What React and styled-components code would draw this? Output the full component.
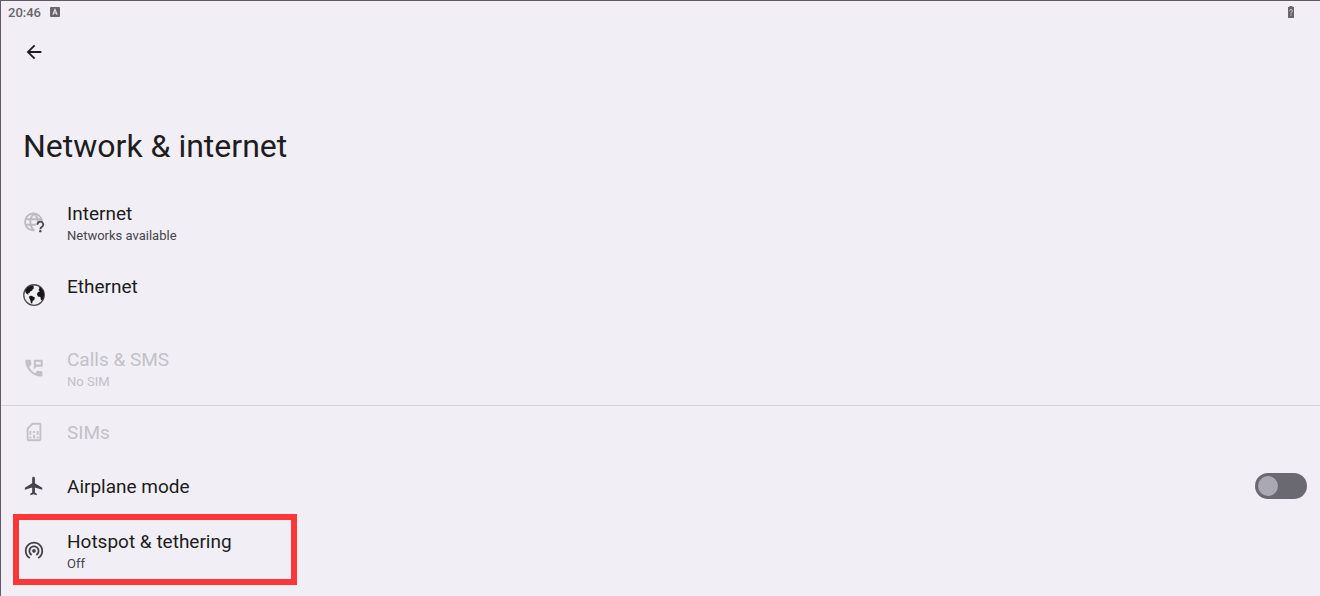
import React, { useState } from 'react'
import styled, { createGlobalStyle } from 'styled-components'

const GlobeIcon = () => (
  <Icon viewBox='0 0 24 24'>
    <g fill='none' stroke='#bcbbc1' strokeWidth='2'>
      <path d='M12.500 21A9.200 9.200 0 1 1 20.600 11' />
      <path d='M12 21C9.200 18.700 8 15.700 8 12S9.200 5.500 12 3c2.800 2.500 4 5 4 8.500' />
      <path d='M3.500 9h17M3.500 15h10.500' />
    </g>
    <path
      d='M15.800 15a3.100 3.100 0 1 1 4.700 2.400c-1.200.8-1.600 1.200-1.600 2.400'
      fill='none'
      stroke='#4b4a50'
      strokeWidth='2'
    />
    <circle cx='18.900' cy='22' r='1.300' fill='#4b4a50' />
  </Icon>
)

const EarthIcon = () => (
  <Icon viewBox='0 0 24 24'>
    <circle cx='12' cy='12' r='11.200' fill='#efeef2' stroke='#4c4c50' strokeWidth='1.400' />
    <path
      fill='#161617'
      d='M2.300 7 5 3.600 8.500 2 12.500 2 11 3.300 12.200 4.400 10.600 5.600 10 7.200 7.900 8.200 7 9.800 5.400 10.200 6.200 11.600 4.200 10.800 2.600 8.800z'
    />
    <path
      fill='#161617'
      d='M7 13.200 9.200 12.900 13 14.800 12.400 17.200 10.600 18.600 9.900 21.200 8.700 21 8 17.800 6.700 15.300z'
    />
    <path
      fill='#161617'
      d='M17 3.600 19.400 3.900 22.300 7.400 23.100 12 22.300 15.600 20.800 18 19.500 17.200 19 14.200 16.300 13.500 15.200 11.300 16.200 9 18.500 8 16.800 6.600 17.900 5z'
    />
  </Icon>
)

const CallsIcon = () => (
  <Icon viewBox='0 0 24 24'>
    <path d='M20.200 15.500l-3.600-.5c-.5 0-.9.100-1.200.4l-2.200 2.200a15.100 15.100 0 0 1-6.590-6.590l2.200-2.210c.3-.3.45-.75.400-1.200L8.700 4c-.1-.6-.5-1-1-1H3.500c-.6 0-1 .45-1 1 .3 9.390 7.810 17 17.200 17.200.9 0 1.500-.45 1.500-1v-3.700c0-.55-.45-1-1-1z' />
    <path d='M11.800 3v10.500l3-3h6.700V3zm2.200 2.200h5.300v3.100H14z' fillRule='evenodd' />
  </Icon>
)

const SimIcon = () => (
  <Icon viewBox='0 0 24 24'>
    <path d='M18 2h-8L4 8v12c0 1.100.9 2 2 2h12c1.100 0 2-.9 2-2V4c0-1.100-.9-2-2-2zm0 18H6V8.830L10.830 4H18v16zM7 17h2v2H7zM15 17h2v2h-2zM7 11h2v4H7zM11 15h2v4h-2zM11 11h2v2h-2zM15 11h2v4h-2z' fillRule='evenodd' />
  </Icon>
)

const PlaneIcon = () => (
  <Icon viewBox='0 0 24 24'>
    <path d='M21 16v-2l-8-5V3.500c0-.83-.67-1.500-1.500-1.500S10 2.670 10 3.500V9l-8 5v2l8-2.500V19l-2 1.500V22l3.500-1 3.500 1v-1.500L13 19v-5.500l8 2.500z' />
  </Icon>
)

const HotspotIcon = () => (
  <Icon viewBox='0 0 24 24'>
    <path d='M12 11c-1.100 0-2 .9-2 2s.9 2 2 2 2-.9 2-2-.9-2-2-2zm6 2c0-3.310-2.690-6-6-6s-6 2.690-6 6c0 2.220 1.210 4.150 3 5.190l1-1.740c-1.190-.7-2-1.970-2-3.450 0-2.210 1.790-4 4-4s4 1.790 4 4c0 1.480-.81 2.750-2 3.450l1 1.740c1.790-1.040 3-2.970 3-5.190zM12 3C6.480 3 2 7.480 2 13c0 3.700 2.010 6.920 4.990 8.650l1-1.730C5.610 18.530 4 15.960 4 13c0-4.420 3.580-8 8-8s8 3.580 8 8c0 2.960-1.610 5.530-4 6.920l1 1.730c2.990-1.730 5-4.950 5-8.650 0-5.520-4.480-10-10-10z' />
  </Icon>
)

function App () {
  const [airplane, setAirplane] = useState(false)

  return (
    <Screen>
      <GlobalStyle />
      <StatusBar>
        <Clock>
          20:46
          <Badge viewBox='0 0 10 10'>
            <rect width='10' height='10' rx='1' fill='#68666b' />
            <path d='M2.800 7.800 5 2.500 7.200 7.800M3.600 6h2.800' fill='none' stroke='#e6e4e9' strokeWidth='1.100' />
          </Badge>
        </Clock>
        <Battery viewBox='0 0 8 12'>
          <path d='M2.500 0h3v1H7v11H1V1h1.500z' fill='#68666b' />
          <path d='M2.700 4.700a1.300 1.300 0 1 1 2 1.200Q4 6.400 4 7.500M4 8.500v1' fill='none' stroke='#d9d7dc' />
        </Battery>
      </StatusBar>

      <BackButton type='button' aria-label='Back'>
        <Icon viewBox='0 0 24 24'>
          <path d='M20 11H7.830l5.590-5.590L12 4l-8 8 8 8 1.410-1.410L7.830 13H20v-2z' />
        </Icon>
      </BackButton>

      <Title>Network &amp; internet</Title>

      <Row>
        <GlobeIcon />
        <RowText>
          <Name>Internet</Name>
          <Summary>Networks available</Summary>
        </RowText>
      </Row>
      <Row>
        <EarthIcon />
        <RowText>
          <Name>Ethernet</Name>
          <Summary />
        </RowText>
      </Row>
      <Row $disabled>
        <CallsIcon />
        <RowText>
          <Name $disabled>Calls &amp; SMS</Name>
          <Summary>No SIM</Summary>
        </RowText>
      </Row>
      <Divider />
      <Row $single $disabled>
        <SimIcon />
        <RowText $single>
          <Name $disabled>SIMs</Name>
        </RowText>
      </Row>
      <Row $single>
        <PlaneIcon />
        <RowText $single>
          <Name as='label' htmlFor='airplane'>
            Airplane mode
          </Name>
        </RowText>
        <Switch
          id='airplane'
          type='checkbox'
          checked={airplane}
          onChange={e => setAirplane(e.target.checked)}
        />
      </Row>
      <Row>
        <Highlight />
        <HotspotIcon />
        <RowText>
          <Name>Hotspot &amp; tethering</Name>
          <Summary>Off</Summary>
        </RowText>
      </Row>
    </Screen>
  )
}
export default App

// Style

const GlobalStyle = createGlobalStyle`
  * {
    box-sizing: border-box;
  }
  body {
    margin: 0;
    background-color: #f1eff5;
    font-family: Roboto, sans-serif;
  }
`
const Screen = styled.main`
  min-height: 100vh;
  border-top: 1px solid #5f5b60;
  border-left: 1px solid #5f5b60;
  color: #1d1c21;
`
const StatusBar = styled.header`
  display: flex;
  align-items: center;
  justify-content: space-between;
  height: 22px;
  padding: 0 25px 0 7px;
`
const Clock = styled.div`
  display: flex;
  align-items: center;
  gap: 9px;
  font-size: 13px;
  font-weight: 500;
  color: #68666b;
`
const Badge = styled.svg`
  width: 10px;
  height: 10px;
`
const Battery = styled.svg`
  width: 8px;
  height: 12px;
`
const Icon = styled.svg`
  flex: none;
  width: 22px;
  height: 22px;
  fill: currentColor;
`
const BackButton = styled.button`
  display: flex;
  margin: 8px 0 0 12px;
  padding: 10px;
  border: 0;
  background: none;
  color: #1d1c21;
  cursor: pointer;
`
const Title = styled.h1`
  margin: 52px 22px 18px;
  font-size: 32px;
  line-height: 42px;
  font-weight: 400;
`
const Row = styled.div`
  position: relative;
  display: flex;
  align-items: center;
  gap: 22px;
  min-height: ${props => (props.$single ? '54px' : '73px')};
  padding: 0 13px 0 22px;
  color: ${props => (props.$disabled ? '#c3c1c7' : '#45444c')};
`
const RowText = styled.div`
  flex: 1;
  padding-top: ${props => (props.$single ? '2px' : '4px')};
`
const Name = styled.div`
  font-size: 19px;
  line-height: 24px;
  color: ${props => (props.$disabled ? 'inherit' : '#1d1c21')};
`
const Summary = styled.div`
  min-height: 20px;
  font-size: 13px;
  line-height: 20px;
`
const Divider = styled.hr`
  height: 1px;
  margin: 1px 0 -1px;
  border: 0;
  background-color: #d6d4da;
`
const Switch = styled.input`
  appearance: none;
  display: flex;
  align-items: center;
  width: 52px;
  height: 26px;
  margin: 0;
  padding: 0 3px;
  border-radius: 13px;
  background-color: #6a6972;
  cursor: pointer;

  &::before {
    content: '';
    width: 20px;
    height: 20px;
    border-radius: 50%;
    background-color: #aaa8b2;
  }
  &:checked {
    justify-content: flex-end;
  }
`
const Highlight = styled.div`
  position: absolute;
  top: 1px;
  left: 12px;
  width: 284px;
  height: 71px;
  border: 6px solid #fd3737;
  pointer-events: none;
`
